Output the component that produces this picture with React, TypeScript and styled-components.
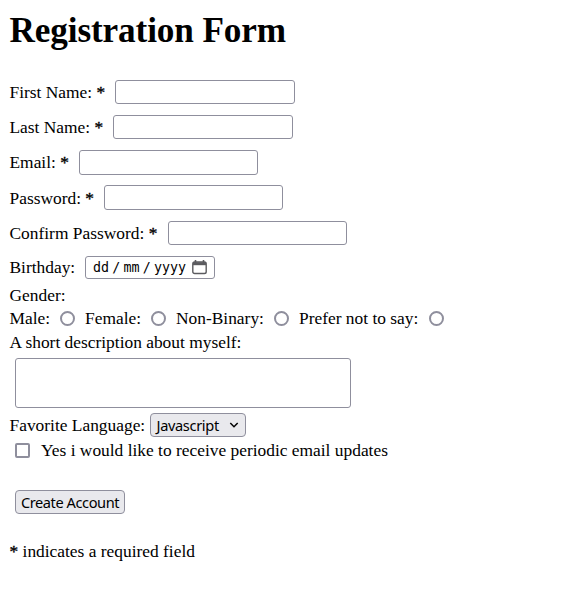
import React from "react";
import styled, { createGlobalStyle } from "styled-components";

const GlobalStyle = createGlobalStyle`
  * { box-sizing: border-box; }
  body {
    margin: 0;
    background: #fff;
    color: #000;
    font: 17.4px "Liberation Serif", "Times New Roman", serif;
    overflow: hidden;
  }
`;

const Page = styled.main`
  padding: 12px 9px 0 9.5px;
`;

const Title = styled.h1`
  margin: 0 0 28px;
  height: 40px;
  font-size: 35.2px;
  letter-spacing: -0.12px;
  line-height: 37px;
  font-weight: bold;
  white-space: nowrap;
`;

const Form = styled.form`
  display: flex;
  flex-direction: column;
`;

const Row = styled.div<{ $height: number; $gap?: number; $indent?: number }>`
  display: flex;
  align-items: center;
  height: ${(p) => p.$height}px;
  margin-bottom: ${(p) => p.$gap ?? 0}px;
  padding-left: ${(p) => p.$indent ?? 0}px;
  line-height: ${(p) => p.$height}px;
  white-space: nowrap;
`;

const Label = styled.label<{ $width?: number; $drop?: number }>`
  flex: none;
  width: ${(p) => (p.$width ? `${p.$width}px` : "auto")};
  margin-top: ${(p) => (p.$drop ?? 0) * 2}px;
`;

const Star = styled.span`
  -webkit-text-stroke: 0.35px #000;
`;

const TextInput = styled.input<{ $width: number }>`
  width: ${(p) => p.$width}px;
  height: 100%;
  margin: 0;
  padding: 1px 4px;
  border: 1px solid #8f8f9d;
  border-radius: 3px;
  background: #fff;
  outline: none;
`;

const DateField = styled.div`
  display: flex;
  align-items: center;
  width: 130px;
  height: 23px;
  padding: 1px 0 0 7px;
  border: 1px solid #8f8f9d;
  border-radius: 3px;
  font: 13.3px/20px "DejaVu Sans Mono", monospace;
`;

const Slash = styled.span`
  width: 14.5px;
  text-align: center;
`;

const CalendarIcon = styled.svg`
  margin: -2px 0 0 6px;
`;

const Radio = styled.input.attrs({ type: "radio" })`
  appearance: none;
  flex: none;
  width: 15px;
  height: 15px;
  margin: -1px 10px 0 0;
  border: 2px solid #8f8f9d;
  border-radius: 50%;
  background: #fff;
`;

const Checkbox = styled.input.attrs({ type: "checkbox" })`
  appearance: none;
  flex: none;
  width: 15px;
  height: 15px;
  margin: 0 11px 0 0;
  border: 2px solid #8f8f9d;
  border-radius: 2px;
  background: #fff;
`;

const TextArea = styled.textarea`
  display: block;
  width: 336px;
  height: 50px;
  margin: 4px 0 5px 5.5px;
  padding: 2px;
  border: 1px solid #8f8f9d;
  border-radius: 3px;
  resize: none;
  outline: none;
`;

const SelectBox = styled.button.attrs({ type: "button" })`
  display: flex;
  align-items: center;
  justify-content: space-between;
  width: 96px;
  height: 24px;
  padding: 0 6px 0 5.5px;
  border: 1px solid #8f8f9d;
  border-radius: 4px;
  background: #e9e9ed;
  color: #000;
  font: 14.6px/22px "Noto Sans", sans-serif;
  letter-spacing: -0.35px;
`;

const SubmitButton = styled.button.attrs({ type: "button" })`
  width: 110px;
  height: 24px;
  padding: 0;
  border: 1px solid #8f8f9d;
  border-radius: 4px;
  background: #e9e9ed;
  color: #000;
  font: 14.6px/22px "Noto Sans", sans-serif;
  letter-spacing: -0.43px;
  white-space: nowrap;
`;

const fields = [
  { label: "First Name:", type: "text", labelWidth: 105.5, width: 180, height: 24, gap: 11, drop: 0 },
  { label: "Last Name:", type: "text", labelWidth: 103.5, width: 180, height: 24, gap: 11, drop: 0 },
  { label: "Email:", type: "email", labelWidth: 69.5, width: 179, height: 25, gap: 10, drop: 0 },
  { label: "Password:", type: "password", labelWidth: 94.5, width: 179, height: 25, gap: 11, drop: 1 },
  { label: "Confirm Password:", type: "password", labelWidth: 158.5, width: 179, height: 24, gap: 11, drop: 0 },
];

const genders = [
  { label: "Male:", width: 50.5 },
  { label: "Female:", width: 66 },
  { label: "Non-Binary:", width: 98 },
  { label: "Prefer not to say:", width: 130 },
];

export default function App() {
  return (
    <>
      <GlobalStyle />
      <Page>
        <Title>Registration Form</Title>
        <Form>
          {fields.map((f) => (
            <Row key={f.label} $height={f.height} $gap={f.gap}>
              <Label $width={f.labelWidth} $drop={f.drop}>
                {f.label} <Star>*</Star>
              </Label>
              <TextInput type={f.type} $width={f.width} />
            </Row>
          ))}
          <Row $height={23} $gap={6}>
            <Label $width={75.5} $drop={-0.5}>Birthday:</Label>
            <DateField>
              <span>dd</span>
              <Slash>/</Slash>
              <span>mm</span>
              <Slash>/</Slash>
              <span>yyyy</span>
              <CalendarIcon width="15" height="15" viewBox="0 0 15 15">
                <path d="M3.5 0v3M11.5 0v3" stroke="#5b5b5f" strokeWidth="1.6" />
                <rect x="0.8" y="2" width="13.4" height="11.5" rx="1.8" fill="none" stroke="#5b5b5f" strokeWidth="1.4" />
                <path d="M1 2.2h13v3H1z" fill="#5b5b5f" />
              </CalendarIcon>
            </DateField>
          </Row>
          <Row $height={22}>
            <Label $drop={-1}>Gender:</Label>
          </Row>
          <Row $height={24}>
            {genders.map((g) => (
              <React.Fragment key={g.label}>
                <Label $width={g.width} $drop={-1}>{g.label}</Label>
                <Radio name="gender" />
              </React.Fragment>
            ))}
          </Row>
          <Row $height={23}>
            <Label>A short description about myself:</Label>
          </Row>
          <TextArea />
          <Row $height={24} $gap={1}>
            <Label $width={140.5}>Favorite Language:</Label>
            <SelectBox>
              Javascript
              <svg width="10" height="6" viewBox="0 0 10 6">
                <path d="M1.3 1L5 4.7L8.7 1" fill="none" stroke="#000" strokeWidth="1.5" />
              </svg>
            </SelectBox>
          </Row>
          <Row $height={25} $gap={27} $indent={5.5}>
            <Checkbox />
            <Label>Yes i would like to receive periodic email updates</Label>
          </Row>
          <Row $height={24} $gap={26} $indent={5.5}>
            <SubmitButton>Create Account</SubmitButton>
          </Row>
          <Row $height={22}>
            <Label>
              <Star>*</Star> indicates a required field
            </Label>
          </Row>
        </Form>
      </Page>
    </>
  );
}
